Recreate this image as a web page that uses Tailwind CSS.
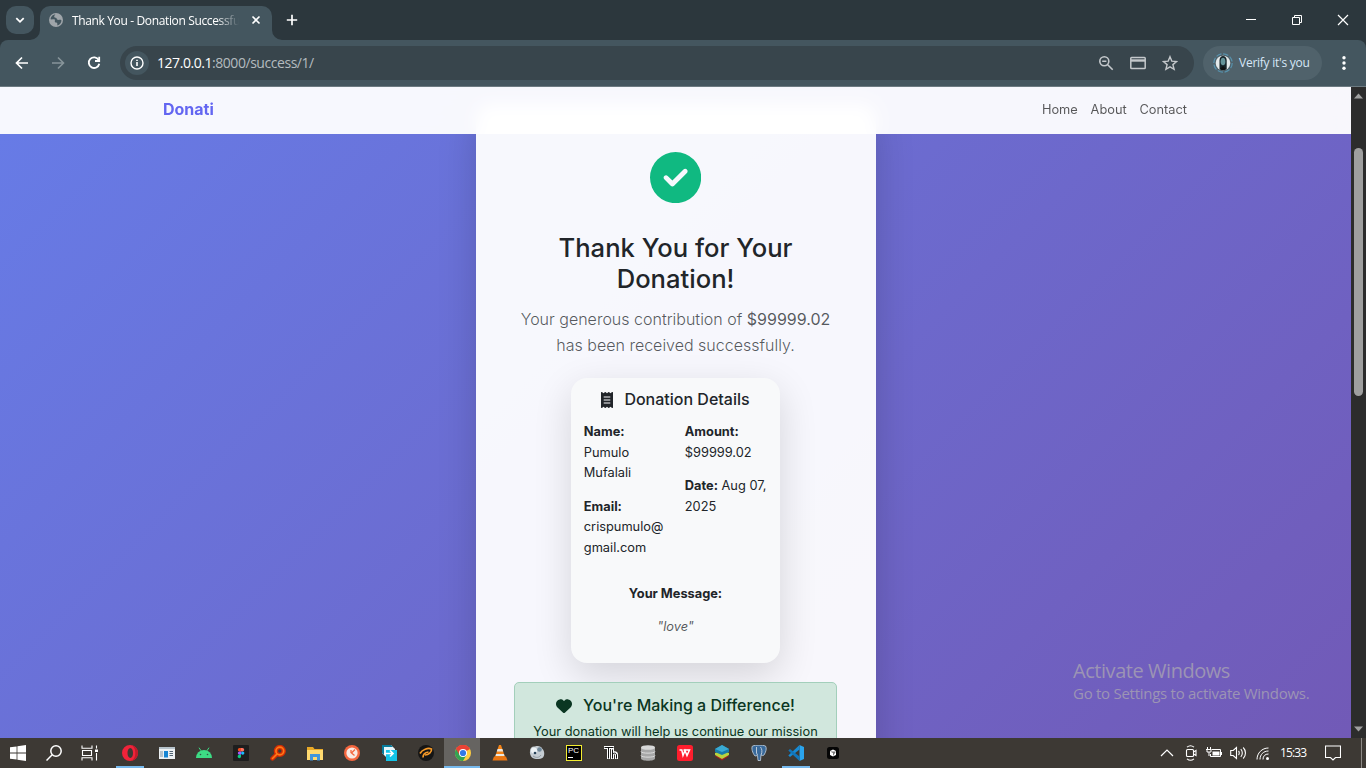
<!DOCTYPE html>
<html lang="en">
<head>
<meta charset="utf-8">
<title>Thank You - Donation Successful</title>
<script src="https://cdn.jsdelivr.net/npm/@tailwindcss/browser@4"></script>
</head>
<body class="w-[1366px] h-[768px] overflow-hidden flex flex-col font-['Open_Sans',sans-serif] bg-[#2c373d]">

<!-- Tab strip -->
<div class="h-10 shrink-0 flex items-start bg-[#2c373d] text-white">
  <div class="ml-1.5 mt-1.5 size-7 rounded-[10px] bg-[#44565f] flex items-center justify-center">
    <svg class="size-3" viewBox="0 0 12 12" fill="none" stroke="#fff" stroke-width="1.8"><path d="M2.3 4.2 6 7.8l3.700-3.600"/></svg>
  </div>
  <div class="relative ml-1.5 mt-1.5 w-[232px] h-[34px] rounded-t-[10px] bg-[#44565f] flex items-center">
    <svg class="absolute -left-2.5 bottom-0 size-2.5" viewBox="0 0 10 10" fill="#44565f"><path d="M10 0v10H0A10 10 0 0 0 10 0"/></svg>
    <svg class="absolute -right-2.5 bottom-0 size-2.5" viewBox="0 0 10 10" fill="#44565f"><path d="M0 0v10h10A10 10 0 0 1 0 0"/></svg>
    <svg class="ml-[9px] mb-1.5 size-3.5 shrink-0" viewBox="0 0 14 14"><circle cx="7" cy="7" r="7" fill="#9fa5aa"/><path d="M6.500 1.500c-1 .8-1.500 1.500-1.200 2.500.4 1 1.600.5 2.200 1.200.500.700.200 1.300 1.200 1.600 1.300.4 2.500-.6 3.700.4.2 2.200-1.600 4.700-4 5.200-.3-1 .3-1.700-.4-2.500-.8-.8-2-.3-2.200-1.500-.1-1 .6-1.400-.2-1.900-1-.5-2.500.2-4-.2C1.700 3.800 3.600 1.500 6.500 1.500Z" fill="#44565f"/></svg>
    <div class="ml-[9px] mb-[5px] w-[167px] overflow-hidden whitespace-nowrap text-[12px] leading-4 tracking-[-0.36px] [mask-image:linear-gradient(90deg,#000_145px,transparent_167px)]">Thank You - Donation Successful</div>
    <svg class="ml-3 mb-1.5 size-2.5" viewBox="0 0 10 10" stroke="#fff" stroke-width="1.600"><path d="m1.500 1.500 7 7m0-7-7 7"/></svg>
  </div>
  <svg class="ml-[14px] mt-[14px] size-3" viewBox="0 0 12 12" stroke="#fff" stroke-width="1.700"><path d="M6 .8v10.400M.8 6h10.400"/></svg>
  <div class="ml-auto flex items-center h-10">
    <svg class="w-[46px] h-10" viewBox="0 0 46 40" stroke="#fff"><path d="M18 19.500h10"/></svg>
    <svg class="w-[46px] h-10" viewBox="0 0 46 40" stroke="#fff" fill="none"><path d="M18.500 17.500h7v7h-7zM20.500 17.500v-2h7v7h-2"/></svg>
    <svg class="w-[46px] h-10" viewBox="0 0 46 40" stroke="#fff" stroke-width="1.200"><path d="m18 15 10 10m0-10L18 25"/></svg>
  </div>
</div>

<!-- Toolbar -->
<div class="h-[47px] shrink-0 bg-[#44565f] rounded-t-[8px] border-b border-[#6c7a81] flex items-center">
  <div class="flex items-center w-[120px] shrink-0">
    <svg class="ml-[14px] size-4" viewBox="0 0 16 16" fill="none" stroke="#fff" stroke-width="1.700"><path d="M14 8H3M8 2.500 2.500 8 8 13.500"/></svg>
    <svg class="ml-5 size-4" viewBox="0 0 16 16" fill="none" stroke="#87949a" stroke-width="1.600"><path d="M2 8h11M8 2.500 13.500 8 8 13.500"/></svg>
    <svg class="ml-5 size-4" viewBox="0 0 16 16" fill="none" stroke="#fff" stroke-width="1.800"><path d="M12.700 5A5.300 5.300 0 1 0 13.300 8.800"/><path d="M13.200 1.800V6H9" /></svg>
  </div>
  <div class="w-[1074px] h-[34px] rounded-full bg-[#38454c] flex items-center shrink-0">
    <div class="ml-[5px] size-6 rounded-full bg-[#44565f] flex items-center justify-center">
      <svg class="size-3.5" viewBox="0 0 14 14" fill="none" stroke="#fff" stroke-width="1.400"><circle cx="7" cy="7" r="6"/><path d="M7 6v4M7 3.700v1.400" stroke-width="1.600"/></svg>
    </div>
    <div class="ml-2 text-[14px] leading-5 text-[#b4bbbf] tracking-[-0.45px]"><span class="text-white tracking-[-0.45px]">127.0.0.1</span>:8000/success/1/</div>
    <div class="ml-auto mr-4 flex items-center gap-4">
      <svg class="size-4" viewBox="0 0 16 16" fill="none" stroke="#c4c8cb" stroke-width="1.600"><circle cx="6.300" cy="6.300" r="4.500"/><path d="m9.700 9.700 5 5M4.200 6.300h4.200"/></svg>
      <svg class="size-4" viewBox="0 0 16 16" fill="none" stroke="#c4c8cb" stroke-width="1.500"><rect x=".8" y="2.500" width="14.400" height="11" rx=".8"/><path d="M1 5.500h14" stroke-width="2.400"/></svg>
      <svg class="size-4" viewBox="0 0 16 16" fill="none" stroke="#c4c8cb" stroke-width="1.400"><path d="m8 1.700 1.800 4.400 4.800.4-3.700 3.100 1.200 4.700L8 11.800l-4.100 2.500 1.200-4.700L1.400 6.500l4.800-.4z"/></svg>
    </div>
  </div>
  <div class="ml-[9px] w-[119px] h-[34px] rounded-full bg-[#50626b] flex items-center shrink-0">
    <svg class="ml-2.5 size-5" viewBox="0 0 20 20"><circle cx="10" cy="10" r="9.200" fill="none" stroke="#5792ad" stroke-width="1.200" stroke-dasharray="5.500 1.700"/><circle cx="10" cy="10" r="7.300" fill="#e5eaeb"/><path d="M6.500 7.500C6.500 4.500 8 3 10 3s3.700 1.500 3.700 4.500V16c-2 1.700-5.500 1.700-7.200 0z" fill="#172429"/><ellipse cx="10" cy="8.500" rx="2.400" ry="3.800" fill="#659399"/><path d="m7 16 3-3 3 3c-2 1.300-4 1.300-6 0" fill="#111"/></svg>
    <span class="ml-[6px] text-[12px] text-[#d7e7f7] tracking-[-0.25px] whitespace-nowrap">Verify it's you</span>
  </div>
  <svg class="ml-4 size-4 mr-auto" viewBox="0 0 16 16" fill="#fff"><circle cx="6" cy="2.700" r="1.700" /><circle cx="6" cy="8" r="1.700"/><circle cx="6" cy="13.300" r="1.700"/></svg>
</div>

<!-- Viewport -->
<div class="relative h-[651px] shrink-0 flex">
  <main class="relative w-[1351px] overflow-hidden bg-[linear-gradient(135deg,#667eea_0%,#764ba2_100%)] bg-[size:1351px_1630px] bg-[position:0_-121px] font-['Inter',sans-serif] text-[12.8px] leading-[20.48px] text-[#212529]">
    <div class="mx-auto mt-[17px] w-[400px] h-[900px] rounded-t-[16px] bg-white/95 shadow-[0_12.8px_38.4px_rgba(0,0,0,0.175)] px-[38.4px] pt-[48.2px] flex flex-col items-center text-center">
      <svg class="size-[51.2px] shrink-0" viewBox="0 0 512 512" fill="#10b981"><path d="M256 512A256 256 0 1 0 256 0a256 256 0 1 0 0 512zM369 209L241 337c-9.400 9.400-24.600 9.400-33.900 0l-64-64c-9.400-9.400-9.400-24.600 0-33.900s24.600-9.400 33.900 0l47 47L335 175c9.400-9.400 24.600-9.400 33.900 0s9.400 24.600 0 33.900z"/></svg>
      <h1 class="mt-[29.800px] text-[25.6px] leading-[30.72px] font-medium">Thank You for Your Donation!</h1>
      <p class="mt-[12.800px] text-[16px] leading-[25.6px] font-light text-[#212529]/75 whitespace-nowrap">Your generous contribution of <strong class="font-normal">$99999.02</strong><br>has been received successfully.</p>
      <section class="mt-[19.5px] w-[209px] h-[285px] shrink-0 rounded-[16px] bg-[#f8f9fa] shadow-[0_12.8px_38.4px_rgba(0,0,0,0.14)] px-[12.8px] pt-[12.300px]">
        <h2 class="flex items-center justify-center text-[16px] leading-[19.2px] font-medium">
          <svg class="mr-[11px] w-[12px] h-4" viewBox="0 0 384 512" fill="#212529"><path d="M14 2.200C22.500-1.700 32.500-.3 39.600 5.800L80 40.400l40.400-34.600c9-7.700 22.300-7.700 31.200 0L192 40.400l40.400-34.600c9-7.700 22.200-7.700 31.200 0L304 40.400l40.400-34.600c7.100-6.100 17.100-7.500 25.600-3.600S384 14.600 384 24v464c0 9.400-5.500 17.900-14 21.800s-18.500 2.500-25.600-3.600L304 471.600l-40.400 34.600c-9 7.700-22.200 7.700-31.200 0L192 471.600l-40.400 34.600c-9 7.700-22.300 7.700-31.200 0L80 471.600l-40.400 34.600c-7.100 6.100-17.100 7.500-25.600 3.600S0 497.400 0 488V24C0 14.600 5.500 6.100 14 2.200zM96 144c-8.800 0-16 7.200-16 16s7.200 16 16 16h192c8.800 0 16-7.200 16-16s-7.200-16-16-16H96zM80 352c0 8.800 7.200 16 16 16h192c8.800 0 16-7.200 16-16s-7.200-16-16-16H96c-8.800 0-16 7.200-16 16zm16-112c-8.800 0-16 7.200-16 16s7.200 16 16 16h192c8.800 0 16-7.200 16-16s-7.200-16-16-16H96z"/></svg>Donation Details
        </h2>
        <div class="mt-[12.800px] flex text-left">
          <div class="w-[101px]">
            <p><strong class="font-bold">Name:</strong><br>Pumulo<br>Mufalali</p>
            <p class="mt-[12.800px]"><strong class="font-bold">Email:</strong><br>crispumulo@<br>gmail.com</p>
          </div>
          <div class="whitespace-nowrap">
            <p><strong class="font-bold">Amount:</strong><br>$99999.02</p>
            <p class="mt-[12.800px]"><strong class="font-bold">Date:</strong> Aug 07,<br>2025</p>
          </div>
        </div>
        <p class="mt-[25.600px] font-bold">Your Message:</p>
        <p class="mt-[12.800px] italic text-[#212529]/75">"love"</p>
      </section>
      <section class="mt-[19.200px] w-[323px] h-[120px] shrink-0 rounded-[5px] border border-[#a3cfbb] bg-[#d1e7dd] text-[#0a3622] pt-[12.800px]">
        <h2 class="flex items-center justify-center text-[16px] leading-[19.2px] font-medium"><svg class="mr-[11px] size-4" viewBox="0 0 512 512" fill="#0a3622"><path d="M47.600 300.400L228.300 469.100c7.500 7 17.400 10.900 27.700 10.900s20.200-3.900 27.700-10.900L464.400 300.400c30.400-28.300 47.600-68 47.600-109.500v-5.800c0-69.900-50.500-129.500-119.400-141C347 36.500 300.600 51.400 268 84L256 96 244 84c-32.600-32.600-79-47.500-124.600-39.900C50.500 55.600 0 115.200 0 185.100v5.800c0 41.500 17.200 81.200 47.600 109.500z"/></svg>You're Making a Difference!</h2>
        <p class="mt-[6.400px]">Your donation will help us continue our mission</p>
      </section>
    </div>
    <!-- Sticky navbar over the scrolled page -->
    <nav class="absolute inset-x-0 top-0 h-[47px] bg-white/95 backdrop-blur-[8px] flex items-center justify-between px-[163px]">
      <span class="text-[16px] font-bold text-[#6366f1] mb-[2px]">Donati</span>
      <div class="flex gap-[12.800px] text-black/65 mb-px mr-px"><span>Home</span><span>About</span><span>Contact</span></div>
    </nav>
    <!-- Activation watermark -->
    <div class="absolute left-[1073px] top-[570px] whitespace-nowrap text-[#9c94b4] font-['Open_Sans',sans-serif]">
      <div class="text-[20px] leading-[27px] tracking-[-0.45px]">Activate Windows</div>
      <div class="text-[15px] leading-[18px] tracking-[-0.27px]">Go to Settings to activate Windows.</div>
    </div>
  </main>
  <div class="w-[15px] bg-[#2c2c2c] flex flex-col items-center">
    <svg class="mt-[6px] w-[9px] h-[6px] shrink-0" viewBox="0 0 9 6" fill="#9f9f9f"><path d="M0 5.500h9L4.500.5z"/></svg>
    <div class="mt-[49px] w-[9px] h-[248px] rounded-full bg-[#9f9f9f]"></div>
    <svg class="mt-auto mb-[6px] w-[9px] h-[6px] shrink-0" viewBox="0 0 9 6" fill="#9f9f9f"><path d="M0 .5h9L4.500 5.500z"/></svg>
  </div>
</div>

<!-- Taskbar -->
<div class="h-[30px] shrink-0 bg-[#3d3934] flex items-center">
  <div class="w-9 flex justify-center"><svg class="size-4" viewBox="0 0 16 16" fill="#fff"><path d="M0 2.300 6.600 1.400v6.200H0zM7.400 1.300 16 0v7.600H7.400zM0 8.400h6.600v6.200L0 13.700zM7.400 8.400H16V16l-8.600-1.300z"/></svg></div>
  <div class="w-9 flex justify-center"><svg class="size-4" viewBox="0 0 16 16" fill="none" stroke="#fff" stroke-width="1.500"><circle cx="10" cy="6" r="5.200"/><path d="M6.200 9.800.5 15.500"/></svg></div>
  <div class="w-[39px] flex justify-center"><svg class="w-[17px] h-4 -ml-1" viewBox="0 0 17 16" fill="none" stroke="#fff" stroke-width="1.100"><path d="M1 .5v2.700h10V.5M1 15.500v-2.700h10v2.700M1.500 5.500h9v5h-9zM15.500.5v3M15.500 8v7.500"/><path d="M14 4.500h3v2.500h-3z" fill="#fff" stroke="none"/></svg></div>

  <div class="relative w-[37px] h-[30px] flex items-center justify-center"><div class="absolute bottom-0 w-7 h-0.5 bg-[#76b9ed]"></div><svg class="size-4" viewBox="0 0 16 16"><path fill-rule="evenodd" d="M8 0a8 8 0 1 0 0 16A8 8 0 0 0 8 0m.3 3c1.700 0 2.700 2.300 2.700 5s-1 5-2.700 5-2.800-2.300-2.800-5 1.100-5 2.800-5" fill="#f0233a"/><path d="M9 .3c5 .7 7 4.200 7 7.700s-2 7-7 7.700c3.500-1.200 4.300-4.700 4.300-7.700S12.500 1.500 9 .3" fill="#c01b2a"/></svg></div>
  <div class="w-[37px] flex justify-center"><svg class="w-4 h-3" viewBox="0 0 16 12"><path fill="#edf1f3" d="M0 0h16v12H0z"/><path fill="#b6c2ca" d="M0 0h16v2H0zM1 4h3v6H1z"/><path fill="#1685d3" d="M5 4h4v6.500H5z"/><path stroke="#536574" d="M10.500 4.500H14M10.500 6.500H14M10.500 8.500H14"/></svg></div>
  <div class="w-[37px] flex justify-center"><svg class="w-4 h-3" viewBox="0 0 16 12"><path d="m3 .7 2 3m8-3-2 3" stroke="#3ddc84" stroke-width="1"/><path d="M0 11a8 8 0 0 1 16 0z" fill="#3ddc84"/><circle cx="4.500" cy="7.500" r=".8" fill="#354"/><circle cx="11.500" cy="7.500" r=".8" fill="#354"/></svg></div>
  <div class="w-[37px] flex justify-center"><svg class="size-4" viewBox="0 0 16 16"><rect width="16" height="16" rx="1" fill="#1e1e1e"/><path d="M8 3H6.500a1.700 1.700 0 0 0 0 3.400H8z" fill="#f24e1e"/><path d="M8 3h1.500a1.700 1.700 0 0 1 0 3.400H8z" fill="#ff7262"/><path d="M8 6.400H6.500a1.700 1.700 0 0 0 0 3.400H8z" fill="#a259ff"/><circle cx="9.700" cy="8.100" r="1.700" fill="#1abcfe"/><path d="M8 9.800H6.500a1.700 1.700 0 1 0 1.500 1.700z" fill="#0acf83"/></svg></div>
  <div class="w-[37px] flex justify-center"><svg class="size-4" viewBox="0 0 16 16" fill="none" stroke-linecap="round"><g stroke="#d42d05" stroke-width="4.400"><circle cx="9.800" cy="6" r="3.900"/><path d="m6.500 9.500-4 4"/></g><g stroke="#ff7a16" stroke-width="1.700"><circle cx="9.800" cy="6" r="3.900"/><path d="m6.500 9.500-4 4"/></g></svg></div>
  <div class="w-[37px] flex justify-center"><svg class="w-4 h-[15px]" viewBox="0 0 16 15"><path fill="#e9a927" d="M0 1h6l1.500 2H16v3H0z"/><path fill="#ffda70" d="M0 4h16v10H0z"/><path fill="#4196dc" d="M3 8h10v6.500h-3V11H6v3.500H3z"/></svg></div>
  <div class="w-[37px] flex justify-center"><svg class="size-4" viewBox="0 0 16 16"><circle cx="8" cy="8" r="8" fill="#f4663e"/><circle cx="8" cy="8" r="5.600" fill="#f8e9e3"/><path d="M11 4.500 7.500 8l3 2.500M7 5v3" stroke="#f4663e" stroke-width="1.300" fill="none"/></svg></div>
  <div class="w-[37px] flex justify-center"><svg class="size-4" viewBox="0 0 16 16"><path fill="#e8f6fa" d="M1 0h9l4 4v8H5L1 8z"/><path fill="#087c9c" d="M1 0h9l2 2H3v8L1 8z"/><path fill="#13c4e8" d="M5 5h11v11H5z"/><path d="M3 8.500h9M9 5.500l3 3-3 3" fill="none" stroke="#fff" stroke-width="1.700"/></svg></div>
  <div class="w-[37px] flex justify-center"><svg class="size-4" viewBox="0 0 16 16"><circle cx="8" cy="8" r="8" fill="#151515"/><g fill="none" stroke="#f69a28" stroke-width="1.700"><path d="M2 8.500C4 4.500 10 2.500 13.500 4c.5 3-3 6-6.500 6"/><path d="M5 12.500c0-3 2-5 5.500-5.500"/></g></svg></div>
  <div class="relative w-[37px] h-[30px] flex items-center justify-center"><div class="absolute inset-y-0 left-0 right-px bg-[#666461] border-b-2 border-[#76b9ed]"></div><svg class="relative size-4" viewBox="0 0 16 16"><circle cx="8" cy="8" r="8" fill="#ffcd40"/><path d="M8 8 1.070 4A8 8 0 0 1 14.930 4z" fill="#e94235"/><path d="M8 8 1.070 4A8 8 0 0 0 8 16l3.500-6z" fill="#34a353"/><path d="M8 4h6.930A8 8 0 0 0 1.070 4L4.500 10z" fill="#e94235"/><circle cx="8" cy="8" r="4" fill="#fff"/><circle cx="8" cy="8" r="3.100" fill="#3279e8"/></svg></div>
  <div class="w-[37px] flex justify-center"><svg class="size-4" viewBox="0 0 16 16"><path fill="#f58417" d="M7 0h2l4 12H3z"/><path d="M5.600 4h4.800l.8 2.500H4.800zM4 9h8l.5 2h-9z" fill="#e8e8e4"/><path d="M2 11.500h12l1.500 4H.5z" fill="#ea7613"/></svg></div>
  <div class="w-[37px] flex justify-center"><svg class="size-4" viewBox="0 0 16 16"><path d="M1 6C1 3 3 1 6 1.500c3-1 6-.5 7.500 2.500 2 2 2.500 6 .5 8.500-3 2-8 2-11 0C1.500 11 .5 8 1 6" fill="#c5ccd2"/><circle cx="5" cy="5.500" r="3" fill="#eef3f6"/><circle cx="10.500" cy="4.500" r="2.300" fill="#6f8799"/><circle cx="6" cy="8" r="1.300" fill="#29435a"/><path d="M4 11c3 2 6 2 8-1" stroke="#9099a1" fill="none"/></svg></div>
  <div class="w-[37px] flex justify-center"><div class="size-4 bg-black border border-[#f4ed31] text-white text-[8px] leading-[9px] pl-[1.500px] font-['Liberation_Sans',sans-serif]">PC<div class="w-[5px] h-px bg-white mt-[2px]"></div></div></div>
  <div class="w-[37px] flex justify-center"><svg class="w-[14px] h-[14px]" viewBox="0 0 14 14" fill="none"><path d="M0 1.500h10M4.500 1.500V13M8.500 3v10M8.500 9c0-3 4-3 4 0v4" stroke="#fff" stroke-width="3"/><path d="M.5 1.500h9M4.500 1.500V12.500M8.500 3.500v9M8.500 9c0-2.500 4-2.500 4 0v3.500" stroke="#111" stroke-width="1"/></svg></div>
  <div class="w-[37px] flex justify-center"><svg class="size-4" viewBox="0 0 16 16"><path d="M1 2.500v11c0 3 14 3 14 0v-11" fill="#a7a7a7"/><ellipse cx="8" cy="2.500" rx="7" ry="2.300" fill="#d8d8d8"/><path d="M1 6.500c0 2.200 14 2.200 14 0M1 10.500c0 2.200 14 2.200 14 0" stroke="#ddd" fill="none" stroke-width="1"/></svg></div>
  <div class="w-[37px] flex justify-center"><svg class="size-4" viewBox="0 0 16 16"><rect width="16" height="16" rx="2.500" fill="#ff1e2d"/><path d="M2.500 5h2.300L6 10.500 8 5.500l2 5L12.500 5H6.500" fill="none" stroke="#fff" stroke-width="1.500"/></svg></div>
  <div class="w-[37px] flex justify-center"><svg class="size-4" viewBox="0 0 16 16"><path d="m1 11 7-3 7 3-7 4.500z" fill="#a61e20"/><path d="m1 8 7-3 7 3v2l-7 4-7-4z" fill="#b8d43e"/><path d="m1 4 7-4 7 4v3l-7 3-7-3z" fill="#167ca8"/><path d="m1 4 7-4 7 4-7 3z" fill="#3aaad3"/></svg></div>
  <div class="w-[37px] flex justify-center"><svg class="size-4" viewBox="0 0 16 16"><path d="M1.500 1c3-1.200 10-1.200 13 0 1.500 2 .5 6-1.500 9-1 1-2 .5-3 0l-.5 5.500H7l-.5-5L4 11C1.500 8 0 3 1.500 1" fill="#39699a" stroke="#c7d3df" stroke-width=".8"/><path d="M5.500 2v6l1 2M9.500 2c1.500 2 2 5 .5 8" stroke="#c7d3df" stroke-width=".9" fill="none"/></svg></div>
  <div class="relative w-[37px] h-[30px] flex items-center justify-center"><div class="absolute bottom-0 w-7 h-0.5 bg-[#76b9ed]"></div><svg class="size-4" viewBox="0 0 16 16"><path d="M11.500 0 16 2v12l-4.500 2z" fill="#2ba5ee"/><path d="M11.500 0v4.500L2 12 .3 10.600z" fill="#178bd5"/><path d="M11.500 16v-4.500L2 4 .3 5.400z" fill="#1176bb"/></svg></div>
  <div class="w-[37px] flex justify-center"><svg class="size-3" viewBox="0 0 12 12"><rect width="12" height="12" rx="2.500" fill="#050505"/><path d="M6 2.500 9 4v4L6 9.500 3 8V4z" fill="#fff"/><path d="M3 4.500h6L6 9V6z" fill="#777"/></svg></div>

  <div class="ml-auto h-full flex items-center">
    <svg class="mr-[11px] w-[14px] h-3" viewBox="0 0 14 12" fill="none" stroke="#fff" stroke-width="1.200"><path d="m1 9 6-6 6 6"/></svg>
    <svg class="mr-[9px] w-3 h-4" viewBox="0 0 12 16" fill="none" stroke="#fff" stroke-width="1.100"><rect x="1.500" y="4.500" width="7" height="7" rx="1"/><path d="m8.500 7 2.500-1.500v5L8.500 9M2 2.200c2-1.700 5-1.700 7 0M2 13.800c2 1.700 5 1.700 7 0"/></svg>
    <svg class="mr-[8px] w-4 h-[14px]" viewBox="0 0 16 14" fill="none" stroke="#fff"><path d="M4.500 8v2.500h10v-7H6M15.500 6v3"/><path d="M6.500 5.500h7v4h-7z" fill="#fff" stroke="none"/><path d="M1.500 1v2M4.500 1v2M0 3.500h5.500M1 3.500v2.500h4V3.500M3 6v4"/></svg>
    <svg class="mr-[9px] w-[17px] h-[14px]" viewBox="0 0 17 14" fill="none" stroke="#fff" stroke-width="1.100"><path d="M.7 4.500h2.500L6.500 1.500v11L3.200 9.500H.7zM8.500 5c1 1 1 3 0 4M10.800 3.200c2 2 2 5.600 0 7.600M13.200 1.500c3 3 3 8 0 11"/></svg>
    <svg class="mr-[11px] w-[13px] h-[13px]" viewBox="0 0 13 13" fill="none" stroke="#fff"><path d="M1 12.500C1 6 6 1 12.500 1"/><path d="M4 12.500c0-5 3.500-8.500 8.500-8.500M7 12.500C7 9 9 7 12.500 7"/><circle cx="11.500" cy="11.500" r="1.500" fill="#fff" stroke="none"/></svg>
    <span class="w-[27px] mr-[18px] text-white text-[12px] tracking-[-0.9px] leading-4 whitespace-nowrap">15:33</span>
    <svg class="w-4 h-4 mr-5" viewBox="0 0 16 16" fill="none" stroke="#fff" stroke-width="1.100"><path d="M.5 1h15v11.500h-5L8 15l-2.500-2.500h-5z"/></svg>
    <div class="w-px h-full bg-[#8c8985] mr-1"></div>
  </div>
</div>
</body>
</html>
